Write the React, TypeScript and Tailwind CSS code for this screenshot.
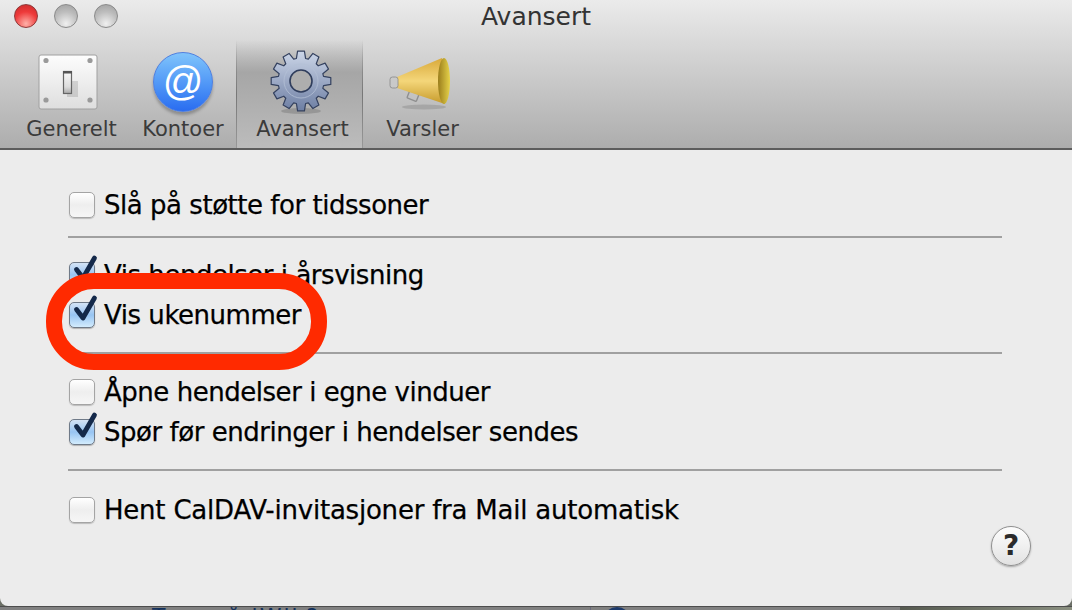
import React from "react";

const font = "font-['DejaVu_Sans',sans-serif]";

function Check({ checked }: { checked?: boolean }) {
  return (
    <div className="relative w-[26px] h-[26px] shrink-0">
      {checked ? (
        <div className="w-[26px] h-[26px] rounded-[5px] border border-[#6f7a88] bg-gradient-to-b from-[#d4e3f5] via-[#97c4f2] to-[#d3ecfd] shadow-[0_1px_1px_rgba(0,0,0,0.25)]" />
      ) : (
        <div className="w-[26px] h-[26px] rounded-[5px] border border-[#a4a4a4] bg-gradient-to-b from-[#ffffff] via-[#eeeeee] to-[#f6f6f6] shadow-[0_1px_1px_rgba(0,0,0,0.2)]" />
      )}
      {checked && (
        <svg className="absolute left-[3px] top-[-10px]" width="28" height="34" viewBox="0 0 28 34">
          <path d="M4.5 17.5 L11 26 L22.5 6" fill="none" stroke="#14294a" strokeWidth="4.8" strokeLinecap="round" strokeLinejoin="round" />
        </svg>
      )}
    </div>
  );
}

function Row({ label, checked, wide }: { label: string; checked?: boolean; wide?: boolean }) {
  return (
    <div className="flex items-center gap-[9px] h-[40px] ml-[1px]">
      <Check checked={checked} />
      <span
        className={
          "text-[26px] leading-none text-black whitespace-nowrap [-webkit-text-stroke:0.25px_black] " +
          (wide ? "tracking-[-0.22px]" : "tracking-[-0.47px]")
        }
      >
        {label}
      </span>
    </div>
  );
}

function Tab({ label, children }: { label: string; children: React.ReactNode }) {
  return (
    <div className="flex flex-col items-center h-[108px]">
      <div className="h-[68px] mt-[8px] flex items-center justify-center">{children}</div>
      <span className="text-[21px] leading-none mt-[3px] text-[#3b3b3b] whitespace-nowrap">{label}</span>
    </div>
  );
}

function Light({ red }: { red?: boolean }) {
  return (
    <div
      className={
        "w-[24px] h-[24px] rounded-full border " +
        (red
          ? "border-[#8e3a3a] bg-[radial-gradient(circle_at_50%_85%,#ffb0a8,#ee3a3a_55%,#c62a2a)]"
          : "border-[#8a8a8a] bg-[radial-gradient(circle_at_50%_85%,#f0f0f0,#bdbdbd_55%,#9e9e9e)]")
      }
    />
  );
}

function SwitchIcon() {
  return (
    <svg width="60" height="56" viewBox="0 0 60 56">
      <defs>
        <linearGradient id="plate" x1="0" y1="0" x2="0" y2="1">
          <stop offset="0" stopColor="#fdfdfd" />
          <stop offset="1" stopColor="#dedede" />
        </linearGradient>
        <linearGradient id="lever" x1="0" y1="0" x2="0" y2="1">
          <stop offset="0" stopColor="#fafafa" />
          <stop offset="0.7" stopColor="#dcdcdc" />
          <stop offset="1" stopColor="#a8a8a8" />
        </linearGradient>
      </defs>
      <rect x="1" y="1" width="58" height="54" rx="2" fill="url(#plate)" stroke="#a0a0a0" />
      <circle cx="8" cy="6.5" r="2.6" fill="#9a9a9a" />
      <circle cx="52" cy="6.5" r="2.6" fill="#9a9a9a" />
      <circle cx="8" cy="46" r="2.6" fill="#9a9a9a" />
      <circle cx="52" cy="46" r="2.6" fill="#9a9a9a" />
      <rect x="29" y="27" width="11" height="16" fill="#000" opacity="0.12" />
      <rect x="25.5" y="17.5" width="8" height="22" fill="url(#lever)" stroke="#666" strokeWidth="1.2" />
      <rect x="25" y="17" width="9" height="2.5" fill="#555" />
    </svg>
  );
}

function AtIcon() {
  return (
    <div className="w-[60px] h-[60px] rounded-full bg-gradient-to-b from-[#80c4fb] to-[#2a6cf0] border border-[#4f7fe0] flex items-center justify-center shadow-[0_3px_3px_rgba(0,0,0,0.25)]">
      <span className="text-white text-[40px] leading-none font-['Liberation_Sans',sans-serif] -mt-[3px]">@</span>
    </div>
  );
}

// twelve teeth, computed so they share one outline
function gearPath() {
  const pts: string[] = [];
  for (let i = 0; i < 12; i++) {
    const a = (i * Math.PI) / 6 - Math.PI / 2;
    const p = (r: number, d: number) => `${(32 + r * Math.cos(a + d)).toFixed(2)} ${(32 + r * Math.sin(a + d)).toFixed(2)}`;
    pts.push(p(23, -0.2), p(30, -0.115), p(30, 0.115), p(23, 0.2));
  }
  return "M" + pts.join(" L") + " Z";
}

function GearIcon() {
  return (
    <svg width="64" height="66" viewBox="0 0 64 66">
      <defs>
        <linearGradient id="gear" x1="0" y1="0" x2="0" y2="1">
          <stop offset="0" stopColor="#ccd6e8" />
          <stop offset="1" stopColor="#6d7ea3" />
        </linearGradient>
      </defs>
      <ellipse cx="32" cy="62" rx="20" ry="3" fill="#000" opacity="0.15" />
      <path d={gearPath()} fill="url(#gear)" stroke="#34415f" strokeWidth="1.2" strokeLinejoin="round" />
      <circle cx="32" cy="32" r="17" fill="none" stroke="#b4c0d6" strokeWidth="0.8" />
      <circle cx="32" cy="32" r="11" fill="#aeaeae" stroke="#2f3d5c" strokeWidth="1.6" />
    </svg>
  );
}

function HornIcon() {
  return (
    <svg width="62" height="58" viewBox="0 0 62 58">
      <defs>
        <linearGradient id="horn" x1="0" y1="0" x2="0" y2="1">
          <stop offset="0" stopColor="#d9a93a" />
          <stop offset="0.5" stopColor="#f4d67a" />
          <stop offset="1" stopColor="#c69a2a" />
        </linearGradient>
        <linearGradient id="mouth" x1="0" y1="0" x2="1" y2="0">
          <stop offset="0" stopColor="#9a7d1c" />
          <stop offset="1" stopColor="#e6d24a" />
        </linearGradient>
      </defs>
      <ellipse cx="36" cy="54" rx="22" ry="2.5" fill="#000" opacity="0.12" />
      <rect x="20" y="39" width="10" height="8" rx="1" fill="none" stroke="#8f8f8f" strokeWidth="1.4" transform="rotate(22 25 43)" />
      <path d="M9 24 L54 5 L57 51 L9 35 Z" fill="url(#horn)" />
      <rect x="2" y="24" width="8" height="11" rx="2.5" fill="#c9c9c9" stroke="#888" strokeWidth="0.8" />
      <ellipse cx="56" cy="28" rx="6" ry="23" fill="url(#mouth)" />
    </svg>
  );
}

export default function App() {
  return (
    <div className={"relative w-[1072px] h-[610px] overflow-hidden bg-[#6b6f66] " + font}>
      <div className="h-[606px] rounded-b-[8px] overflow-hidden bg-[#ececec] flex flex-col">
        <header className="h-[150px] shrink-0 border-b-2 border-[#5d5d5d] bg-gradient-to-b from-[#ebebeb] to-[#adadad] flex flex-col">
          <div className="relative h-[40px] flex items-start pt-[4px] pl-[14px] gap-[16px] shrink-0">
            <Light red />
            <Light />
            <Light />
            <span className="absolute inset-x-0 top-[4px] text-center text-[25px] leading-none text-[#333]">Avansert</span>
          </div>
          <div className="flex items-start pl-[24px]">
            <div className="w-[95px]">
              <Tab label="Generelt"><div className="mr-[7px]"><SwitchIcon /></div></Tab>
            </div>
            <div className="w-[117px] pl-[11px]">
              <Tab label="Kontoer"><AtIcon /></Tab>
            </div>
            <div className="relative w-[127px] h-[108px] bg-gradient-to-b from-transparent via-[#a6a6a6] via-30% to-[#bcbcbc]">
              <div className="absolute left-0 inset-y-0 w-px bg-gradient-to-b from-transparent via-[#777777] to-[#999999]" />
              <div className="absolute right-0 inset-y-0 w-px bg-gradient-to-b from-transparent via-[#777777] to-[#999999]" />
              <div className="pl-[6px]">
                <Tab label="Avansert"><div className="mr-[4px]"><GearIcon /></div></Tab>
              </div>
            </div>
            <div className="w-[119px]">
              <Tab label="Varsler"><div className="mr-[7px]"><HornIcon /></div></Tab>
            </div>
          </div>
        </header>
        <main className="relative flex-1 px-[68px] pt-[35px]">
          <Row label="Slå på støtte for tidssoner" />
          <div className="border-t-2 border-[#a0a0a0] w-[934px] mt-[11px] mb-[17px]" />
          <Row label="Vis hendelser i årsvisning" checked />
          <Row label="Vis ukenummer" checked />
          <div className="border-t-2 border-[#a0a0a0] w-[934px] mt-[17px] mb-[18px]" />
          <Row label="Åpne hendelser i egne vinduer" />
          <Row label="Spør før endringer i hendelser sendes" checked />
          <div className="border-t-2 border-[#a0a0a0] w-[934px] mt-[17px] mb-[19px]" />
          <Row label="Hent CalDAV-invitasjoner fra Mail automatisk" wide />
          <button className="absolute right-[41px] top-[376px] w-[40px] h-[40px] rounded-full border border-[#8f8f8f] bg-gradient-to-b from-[#fdfdfd] via-[#f0f0f0] to-[#e2e2e2] shadow-[0_1px_2px_rgba(0,0,0,0.3)] text-[28px] font-bold leading-none text-[#2b2b2b]">?</button>
        </main>
      </div>
      {/* the window behind, only its top few pixels show */}
      <div className="flex h-[4px] border-t border-[#4d4d4d] overflow-hidden">
        <div className="relative w-[900px] h-[20px] bg-[#808080]">
          <span className="absolute left-[152px] top-[-1px] text-[22px] leading-none tracking-[2px] text-[#13315c]">Tema å lWlk?</span>
          <div className="absolute left-[590px] inset-y-0 w-px bg-[#6a6a7a]" />
          <div className="absolute left-[603px] top-0 w-[28px] h-[28px] rounded-full border-[3px] border-[#1d3a6b]" />
        </div>
        <div className="flex-1 bg-gradient-to-r from-[#565a50] to-[#8a8f80]" />
      </div>
      <div className="absolute left-[46px] top-[273px] w-[281px] h-[97px] rounded-[48px] border-[16px] border-[#ff2a00]" />
    </div>
  );
}
